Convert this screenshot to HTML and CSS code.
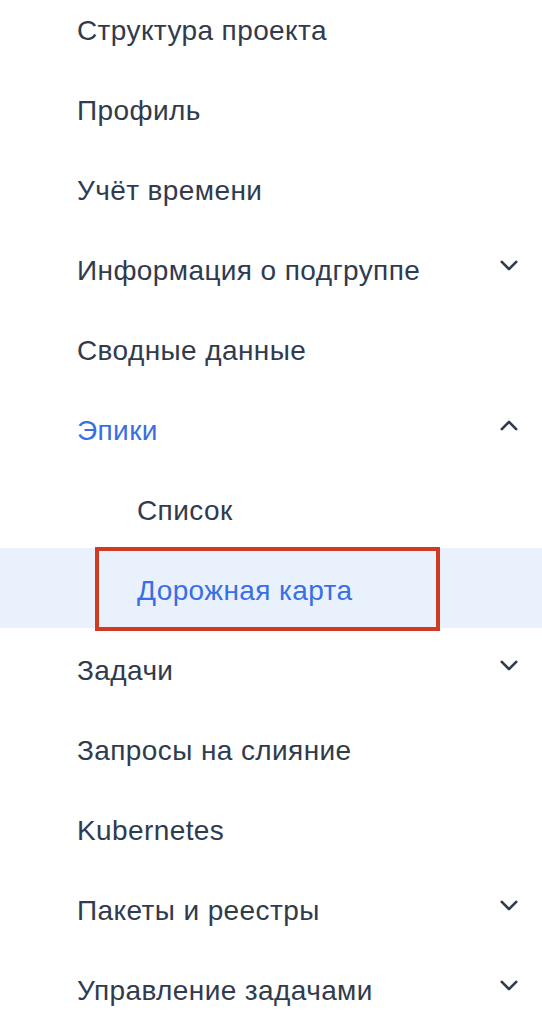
FILE: index.html
```html
<!DOCTYPE html>
<html>
<head>
    <meta charset="UTF-8">
    <meta name="viewport" content="width=device-width, initial-scale=1.0">
    <title>Меню проекта</title>
    <link rel="stylesheet" href="styles.css">
</head>
<body>
    <nav class="side-menu">
      <div class="menu-item">Структура проекта</div>
      <div class="menu-item">Профиль</div>
      <div class="menu-item">Учёт времени</div>
      <div class="menu-item">Информация о подгруппе
        <svg class="chevron" viewBox="0 0 20 12"><path d="M2 2l8 8 8-8"/></svg>
      </div>
      <div class="menu-item">Сводные данные</div>
      <div class="menu-item active">Эпики
        <svg class="chevron" viewBox="0 0 20 12"><path d="M2 10l8-8 8 8"/></svg>
      </div>
      <div class="menu-item sub">Список</div>
      <div class="menu-item sub current">
        <span class="sub-label">Дорожная карта</span>
        <div class="mark"></div>
      </div>
      <div class="menu-item">Задачи
        <svg class="chevron" viewBox="0 0 20 12"><path d="M2 2l8 8 8-8"/></svg>
      </div>
      <div class="menu-item">Запросы на слияние</div>
      <div class="menu-item">Kubernetes</div>
      <div class="menu-item">Пакеты и реестры
        <svg class="chevron" viewBox="0 0 20 12"><path d="M2 2l8 8 8-8"/></svg>
      </div>
      <div class="menu-item">Управление задачами
        <svg class="chevron" viewBox="0 0 20 12"><path d="M2 2l8 8 8-8"/></svg>
      </div>
    </nav>
</body>
</html>
```

FILE: styles.css
```css
body {
  margin: 0;
  background: #fff;
  font-family: "Liberation Sans", Arial, sans-serif;
  overflow: hidden;
}

.side-menu {
  margin-top: -12px;
}

.menu-item {
  position: relative;
  display: flex;
  align-items: center;
  justify-content: space-between;
  height: 80px;
  padding: 5px 24px 0 77px;
  box-sizing: border-box;
  font-size: 28px;
  letter-spacing: 0.4px;
  color: #303b4d;
}

.menu-item.active {
  color: #3a6fe4;
}

.menu-item.sub {
  padding-left: 137px;
}

.menu-item.current {
  background: #e9f1fc;
  color: #3a6fe4;
}

.chevron {
  width: 18px;
  height: 11px;
  margin-top: -10px;
  fill: none;
  stroke: #303b4d;
  stroke-width: 3;
  stroke-linecap: round;
  stroke-linejoin: round;
}

/* red frame round the picked item */
.mark {
  position: absolute;
  left: 95px;
  top: -1px;
  width: 345px;
  height: 84px;
  border: 4.5px solid #d03a22;
  box-sizing: border-box;
}
```
